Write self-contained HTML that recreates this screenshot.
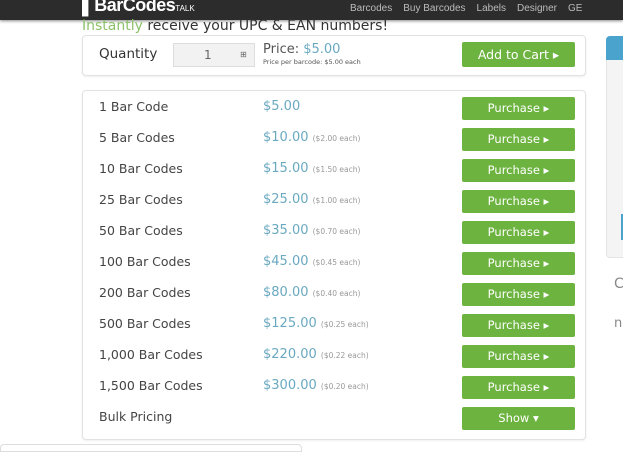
<!DOCTYPE html>
<html><head><style>
body{margin:0;width:623px;height:449px;overflow:hidden;background:#fff;font-family:"DejaVu Sans",sans-serif;position:relative}
.nav{position:absolute;left:0;top:0;width:623px;height:20px;background:#2c2c2c;box-shadow:0 1px 3px #888;z-index:2}
.logo{position:absolute;left:82px;top:-5px;color:#fff;font-weight:bold;font-size:18px;letter-spacing:-0.5px;font-family:"Liberation Sans",sans-serif}
.logo small{font-size:8px;font-weight:normal;letter-spacing:0}
.links{position:absolute;top:3px;left:350px;color:#bbb;font-size:10px;white-space:nowrap;font-family:"Liberation Sans",sans-serif}
.links span{margin-right:11px}
.tag{position:absolute;left:82px;top:18px;font-size:14px;line-height:16px;color:#333;z-index:3}
.tag b{color:#8cc26a;font-weight:normal}
.box{position:absolute;left:82px;width:502px;border:1px solid #e2e2e2;border-radius:4px;background:#fff;box-shadow:0 1px 2px #eee}
.btn{position:absolute;left:462px;width:113px;height:23px;background:#6db33f;border-radius:2px;color:#fff;font-size:11.5px;text-align:center;line-height:23px}
.row{position:absolute;left:99px;font-size:12.5px;color:#444}
.pr{position:absolute;left:263px;font-size:13px;color:#6aa9c0}
.pr small{font-size:7.5px;color:#999}
</style></head><body>
<div class="nav"><div class="logo">▌BarCodes<small>TALK</small></div>
<div class="links"><span>Barcodes</span><span>Buy Barcodes</span><span>Labels</span><span>Designer</span><span>GE</span></div></div>
<div class="tag"><b>Instantly</b> receive your UPC &amp; EAN numbers!</div>
<div class="box" style="top:35px;height:39px"></div>
<div class="row" style="top:46px;font-size:13.5px;color:#333">Quantity</div>
<div style="position:absolute;left:173px;top:43px;width:80px;height:22px;background:#f2f2f2;border:1px solid #ddd;font-size:12px;color:#666;line-height:22px"><span style="margin-left:30px">1</span><span style="position:absolute;left:66px;font-size:8px">⊞</span></div>
<div style="position:absolute;left:263px;top:42px;font-size:13px;color:#555">Price: <span style="color:#6aa9c0">$5.00</span></div>
<div style="position:absolute;left:263px;top:58px;font-size:6.5px;color:#555">Price per barcode: $5.00 each</div>
<div class="btn" style="top:42px;height:25px;line-height:25px;font-size:12.5px">Add to Cart ▸</div>
<div class="box" style="top:90px;height:348px"></div>
<div style="position:absolute;left:606px;top:36px;width:20px;height:220px;background:#f4f4f4;border-radius:4px 0 0 4px;border:1px solid #e4e4e4"></div>
<div style="position:absolute;left:606px;top:36px;width:20px;height:24px;background:#4aa3cc;border-radius:4px 0 0 0"></div>
<div style="position:absolute;left:621px;top:214px;width:3px;height:26px;background:#4aa3cc"></div>
<div style="position:absolute;left:614px;top:276px;font-size:14px;color:#888">C</div>
<div style="position:absolute;left:614px;top:316px;font-size:13px;color:#888">n</div>
<div style="position:absolute;left:0;top:444px;width:300px;height:6px;border:1px solid #ddd;border-radius:4px 4px 0 0"></div>
<div class="row" style="top:99px">1 Bar Code</div><div class="pr" style="top:99px">$5.00</div><div class="btn" style="top:97px">Purchase ▸</div>
<div class="row" style="top:130px">5 Bar Codes</div><div class="pr" style="top:130px">$10.00 <small>($2.00 each)</small></div><div class="btn" style="top:128px">Purchase ▸</div>
<div class="row" style="top:161px">10 Bar Codes</div><div class="pr" style="top:161px">$15.00 <small>($1.50 each)</small></div><div class="btn" style="top:159px">Purchase ▸</div>
<div class="row" style="top:192px">25 Bar Codes</div><div class="pr" style="top:192px">$25.00 <small>($1.00 each)</small></div><div class="btn" style="top:190px">Purchase ▸</div>
<div class="row" style="top:223px">50 Bar Codes</div><div class="pr" style="top:223px">$35.00 <small>($0.70 each)</small></div><div class="btn" style="top:221px">Purchase ▸</div>
<div class="row" style="top:254px">100 Bar Codes</div><div class="pr" style="top:254px">$45.00 <small>($0.45 each)</small></div><div class="btn" style="top:252px">Purchase ▸</div>
<div class="row" style="top:285px">200 Bar Codes</div><div class="pr" style="top:285px">$80.00 <small>($0.40 each)</small></div><div class="btn" style="top:283px">Purchase ▸</div>
<div class="row" style="top:316px">500 Bar Codes</div><div class="pr" style="top:316px">$125.00 <small>($0.25 each)</small></div><div class="btn" style="top:314px">Purchase ▸</div>
<div class="row" style="top:347px">1,000 Bar Codes</div><div class="pr" style="top:347px">$220.00 <small>($0.22 each)</small></div><div class="btn" style="top:345px">Purchase ▸</div>
<div class="row" style="top:378px">1,500 Bar Codes</div><div class="pr" style="top:378px">$300.00 <small>($0.20 each)</small></div><div class="btn" style="top:376px">Purchase ▸</div>
<div class="row" style="top:409px">Bulk Pricing</div><div class="btn" style="top:407px">Show ▾</div>
</body></html>
